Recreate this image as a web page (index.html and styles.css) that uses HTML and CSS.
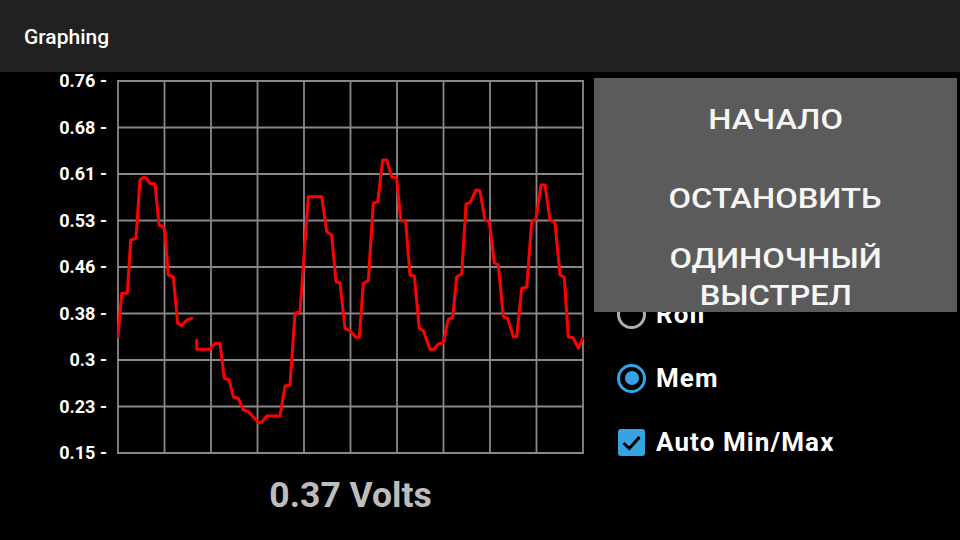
FILE: index.html
```html
<!DOCTYPE html>
<html lang="ru">
<head>
<meta charset="utf-8">
<title>Graphing</title>
<link rel="stylesheet" href="styles.css">
</head>
<body>
<div class="app">
  <header class="appbar">Graphing</header>
  <main class="content">
    <section class="scope">
      <div class="axis">
        <span>0.76 -</span>
        <span>0.68 -</span>
        <span>0.61 -</span>
        <span>0.53 -</span>
        <span>0.46 -</span>
        <span>0.38 -</span>
        <span>0.3 -</span>
        <span>0.23 -</span>
        <span>0.15 -</span>
      </div>
      <svg class="plot" width="467" height="374" viewBox="0 0 467 374">
        <path class="grid" d="M1 0V374M47.5 0V374M94 0V374M140.5 0V374M187 0V374M233.5 0V374M280 0V374M326.5 0V374M373 0V374M419.5 0V374M466 0V374M0 1H467M0 47.5H467M0 94H467M0 140.5H467M0 187H467M0 233.5H467M0 280H467M0 326.5H467M0 373H467"/>
        <path class="trace" d="M1 257L4.7 213.3L10.3 213.3L13.7 160L19 158.3L23 100L26.3 97.3L29.7 98.3L33 103.3L38 104L42 145L46.3 146.7L48 152L51.3 195L56.3 196.7L60.7 243.3L64.7 245.7L69.7 240L74.7 238.3"/>
        <path class="trace" d="M79.7 260L79.7 269.3L93 269.3L98 263.3L103 263.3L107.3 298.3L112.3 300L116.3 316.7L121.3 318.3L126.3 330L131.3 331.7L141.3 342.3L144.7 342.3L149.7 336L163 336L168 306L173 305L178 233.3L183 231.7L191.3 116.7L204.7 116.7L209.7 151.7L214.7 155L219 201.7L223 202.7L228 248.3L233 250.7L239 257.3L242.3 257.3L246.3 203.3L251.3 200.7L256.3 123.3L260.7 121.7L265.7 80L269.7 80L274.7 96.7L279.7 98.3L283.7 140L288.7 141.7L293 195L297.3 196L302.3 248.3L306.3 250.7L313 269.3L317 269.3L321.3 264L326.3 262.7L331.3 239.3L335.7 237.3L339.7 196.7L344.7 194L349 124L353 122.7L359 110L363 110.7L368 140L372.3 141.7L377.3 182.7L381.3 185L386.3 236.7L390.7 238.3L396.3 256.7L399.7 256.7L404.7 208.3L409.7 207.3L414.7 141.7L419 139.3L424 105L428 105L433 140L438 142.3L443 195L447.3 197.3L451.3 256.7L456.3 257.7L461.3 268.3L465.7 258.3"/>
      </svg>
      <div class="reading">0.37 Volts</div>
    </section>
    <aside class="controls">
      <div class="control">
        <span class="radio"></span>
        <span class="label">Roll</span>
      </div>
      <div class="control">
        <span class="radio radio-on"></span>
        <span class="label">Mem</span>
      </div>
      <div class="control">
        <span class="checkbox">
          <svg width="27" height="27" viewBox="0 0 27 27"><path d="M5.6 14L11.3 19.6L21.6 8" fill="none" stroke="#000" stroke-width="3"/></svg>
        </span>
        <span class="label">Auto Min/Max</span>
      </div>
    </aside>
  </main>
  <div class="menu">
    <div class="menu-item"><span>НАЧАЛО</span></div>
    <div class="menu-item menu-item-second"><span>ОСТАНОВИТЬ</span></div>
    <div class="menu-item menu-item-wrap"><span>ОДИНОЧНЫЙ<br>ВЫСТРЕЛ</span></div>
  </div>
</div>
</body>
</html>
```
FILE: styles.css
```css
* { box-sizing: border-box; }

html, body {
  margin: 0;
  padding: 0;
  background: #000;
}

body {
  width: 960px;
  height: 540px;
  overflow: hidden;
  font-family: Roboto, "Noto Sans", "Liberation Sans", sans-serif;
  color: #fff;
}

.app {
  position: relative;
  width: 960px;
  height: 540px;
}

.appbar {
  height: 72px;
  background: #212121;
  display: flex;
  align-items: center;
  padding: 1px 0 0 24px;
  font-size: 21px;
  font-weight: 500;
  color: #fff;
}

.content {
  display: flex;
  align-items: flex-start;
}

.scope {
  display: grid;
  grid-template-columns: 107px 467px;
  column-gap: 10px;
}

.axis {
  height: 390px;
  display: flex;
  flex-direction: column;
  justify-content: space-between;
  text-align: right;
  font-size: 18px;
  line-height: 18px;
  font-weight: 700;
  color: #fff;
  white-space: pre;
}

.plot {
  display: block;
  margin-top: 8px;
}

.grid {
  fill: none;
  stroke: #888;
  stroke-width: 1.8;
}

.trace {
  fill: none;
  stroke: #ff0000;
  stroke-width: 3;
  stroke-linejoin: round;
  stroke-linecap: round;
}

.reading {
  grid-column: 2;
  margin-top: 13px;
  text-align: center;
  font-size: 35.5px;
  line-height: 40px;
  font-weight: 700;
  color: #bdbdbd;
}

.controls {
  margin-left: 33px;
  padding-top: 210px;
  display: flex;
  flex-direction: column;
}

.control {
  height: 64px;
  display: flex;
  align-items: center;
  gap: 10px;
}

.label {
  font-size: 26px;
  font-weight: 700;
  letter-spacing: 1.1px;
  color: #fff;
}

.radio {
  width: 29px;
  height: 29px;
  border-radius: 50%;
  border: 3px solid #b0b0b0;
  display: flex;
  align-items: center;
  justify-content: center;
}

.radio-on {
  border-color: #35a3e4;
}

.radio-on::after {
  content: "";
  width: 14px;
  height: 14px;
  border-radius: 50%;
  background: #35a3e4;
}

.checkbox {
  width: 27px;
  height: 27px;
  margin-left: 1px;
  margin-right: 1px;
  border-radius: 3px;
  background: #35a3e4;
  display: flex;
}

.menu {
  position: absolute;
  left: 594px;
  top: 78px;
  width: 363px;
  height: 234px;
  padding-top: 2px;
  background: #5b5b5b;
  color: #f6f6f6;
  font-size: 27px;
  font-weight: 500;
}

.menu-item {
  height: 80px;
  display: flex;
  align-items: center;
  justify-content: center;
  text-align: center;
}

.menu-item-second {
  height: 78px;
}

.menu-item span {
  display: inline-block;
  transform: scaleX(1.21);
}

.menu-item-wrap {
  height: 74px;
  padding-top: 3px;
  align-items: flex-start;
  line-height: 37px;
}
```
